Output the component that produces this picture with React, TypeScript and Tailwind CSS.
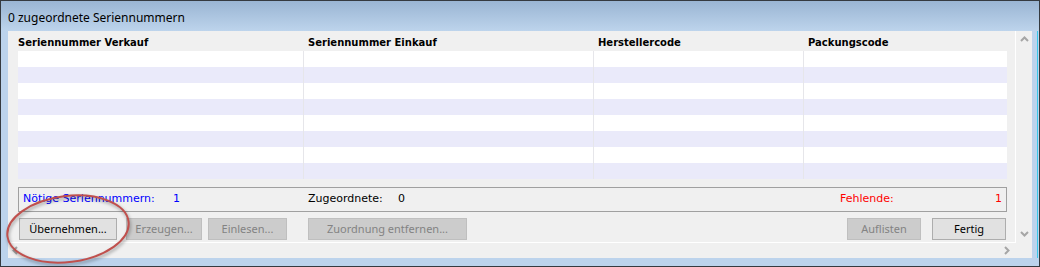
import React from 'react'

const columns = [
    { label: 'Seriennummer Verkauf', width: 'w-[285px]', first: true },
    { label: 'Seriennummer Einkauf', width: 'w-[290px]', first: false },
    { label: 'Herstellercode', width: 'w-[210px]', first: false },
    { label: 'Packungscode', width: 'flex-1', first: false },
]

const rows = [0, 1, 2, 3, 4, 5, 6, 7]

const uiFont = { fontFamily: '"Noto Sans", "Open Sans", Arial, sans-serif' }
const gridFont = { fontFamily: '"DejaVu Sans", Verdana, sans-serif' }

function Chevron({ dir }: { dir: 'up' | 'down' | 'left' | 'right' }) {
    // small grey scrollbar arrow
    const points = {
        up: '1,6 4.5,2.5 8,6',
        down: '1,2 4.5,5.5 8,2',
        left: '6,1 2.5,4.5 6,8',
        right: '2,1 5.5,4.5 2,8',
    }[dir]
    return (
        <svg width="9" height="9" viewBox="0 0 9 9">
            <polyline points={points} fill="none" stroke="#a6a6a6" strokeWidth="2" />
        </svg>
    )
}

function Button({ label, width, disabled, className }: { label: string; width: string; disabled?: boolean; className?: string }) {
    return (
        <div
            className={`${width} ${className ?? ''} h-[22px] flex items-center justify-center border text-[11px] ${
                disabled ? 'bg-[#cccccc] border-[#bfbfbf] text-[#838383]' : 'bg-[#e1e1e1] border-[#adadad] text-black'
            }`}
            style={uiFont}
        >
            {label}
        </div>
    )
}

export default function App() {
    return (
        <div className="relative w-[1040px] h-[267px] border border-[#353a40] bg-[#bcd3ec] flex flex-col overflow-hidden">
            {/* Title bar */}
            <div
                className="h-[30px] flex items-end pl-[7px] pb-[4px] bg-gradient-to-b from-[#9ab5d3] to-[#bdd4ec] text-[12px] text-black"
                style={uiFont}
            >
                0 zugeordnete Seriennummern
            </div>

            <div className="flex">
                <div className="w-[7px]" />
                {/* Panel */}
                <div className="w-[1024px] h-[227px] bg-[#f0f0f0] flex flex-col">
                    <div className="flex h-[212px]">
                        <div className="w-[1008px] h-[212px] border-r border-b border-white flex flex-col pl-[10px]">
                            {/* Header */}
                            <div className="h-[20px] w-[989px] flex items-center pt-[3px] text-[10px] font-bold text-black" style={gridFont}>
                                {columns.map((c) => (
                                    <div key={c.label} className={`${c.width} ${c.first ? '' : 'pl-[5px]'}`}>
                                        {c.label}
                                    </div>
                                ))}
                            </div>
                            {/* Rows */}
                            <div className="w-[989px] flex flex-col">
                                {rows.map((r) => (
                                    <div key={r} className={`h-[16px] flex ${r % 2 === 0 ? 'bg-white' : 'bg-[#eaeafa]'}`}>
                                        {columns.map((c) => (
                                            <div key={c.label} className={`${c.width} h-full ${c.first ? '' : 'border-l border-[#e6e6ea]'}`} />
                                        ))}
                                    </div>
                                ))}
                            </div>
                            {/* Summary */}
                            <div
                                className="mt-[8px] w-[989px] h-[25px] border border-[#a0a0a0] flex items-center pl-[4px] pr-[4px] text-[11px]"
                                style={gridFont}
                            >
                                <div className="w-[285px] flex text-[#0000ff]">
                                    <span className="w-[150px]">Nötige Seriennummern:</span>
                                    <span>1</span>
                                </div>
                                <div className="flex text-black">
                                    <span className="w-[90px]">Zugeordnete:</span>
                                    <span>0</span>
                                </div>
                                <div className="flex-1" />
                                <div className="flex text-[#ff0000]">
                                    <span className="w-[155px]">Fehlende:</span>
                                    <span>1</span>
                                </div>
                            </div>
                            {/* Buttons */}
                            <div className="mt-[6px] w-[989px] flex">
                                <Button label="Übernehmen..." width="w-[98px]" className="ml-[1px]" />
                                <Button label="Erzeugen..." width="w-[76px]" className="ml-[9px]" disabled />
                                <Button label="Einlesen..." width="w-[79px]" className="ml-[6px]" disabled />
                                <Button label="Zuordnung entfernen..." width="w-[159px]" className="ml-[21px]" disabled />
                                <div className="flex-1" />
                                <Button label="Auflisten" width="w-[74px]" disabled />
                                <Button label="Fertig" width="w-[74px]" className="ml-[11px] mr-[1px]" />
                            </div>
                        </div>
                        {/* Vertical scrollbar */}
                        <div className="w-[16px] flex flex-col justify-between items-center py-[4px]">
                            <Chevron dir="up" />
                            <Chevron dir="down" />
                        </div>
                    </div>
                    {/* Horizontal scrollbar */}
                    <div className="h-[15px] w-[1008px] flex items-center justify-between pl-[3px] pr-[4px]">
                        <Chevron dir="left" />
                        <Chevron dir="right" />
                    </div>
                </div>
                <div className="w-[5px]" />
                <div className="w-[1px] bg-[#3ac8ea]" />
            </div>

            {/* Annotation ring around the button */}
            <svg className="absolute left-0 top-0 pointer-events-none" width="1040" height="267" viewBox="0 0 1040 267">
                <defs>
                    <filter id="soft" x="-20%" y="-20%" width="140%" height="140%">
                        <feGaussianBlur stdDeviation="1.5" />
                    </filter>
                </defs>
                <ellipse cx="68" cy="230" rx="61" ry="33" transform="rotate(-7 68 230)" fill="none" stroke="rgba(0,0,0,0.25)" strokeWidth="3" filter="url(#soft)" />
                <ellipse cx="67" cy="228" rx="61" ry="33" transform="rotate(-7 67 228)" fill="none" stroke="#c0504d" strokeWidth="2" />
            </svg>
        </div>
    )
}
